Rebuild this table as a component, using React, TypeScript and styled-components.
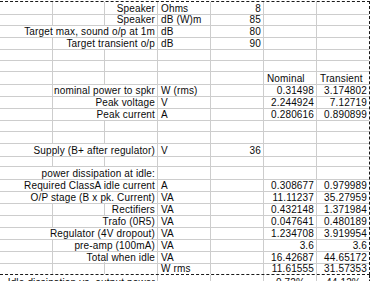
import React from "react";
import styled, { createGlobalStyle } from "styled-components";

const GlobalStyle = createGlobalStyle`
    html, body {
        margin: 0;
        padding: 0;
        background: #ffffff;
    }
    body {
        font-family: "Liberation Sans", Arial, sans-serif;
        overflow: hidden;
    }
`;

const GRID = "#cdcdcd";
const BREAK = "#1a1a1a";
const COLUMNS = "53px 52px 53px 53px 53px 53px 52px";

const Sheet = styled.div`
    padding-top: 1px;
    width: 373px;
    height: 281px;
    overflow: hidden;
`;

const Page = styled.div<{ $closed?: boolean }>`
    width: 369px;
    border-right: 1px dashed ${BREAK};
    border-top: ${(p) => (p.$closed ? `1px dashed ${BREAK}` : "none")};
    border-bottom: ${(p) => (p.$closed ? `1px dashed ${BREAK}` : "none")};

    & > div:last-child > div {
        border-bottom: ${(p) => (p.$closed ? "none" : `1px solid ${GRID}`)};
    }
`;

const Row = styled.div<{ $height: number; $drop?: number }>`
    display: grid;
    grid-template-columns: ${COLUMNS};
    height: ${(p) => p.$height}px;

    & > div {
        padding-top: ${(p) => 1 + (p.$drop ?? 0)}px;
    }

    & > div:last-child {
        border-right: none;
    }
`;

const Cell = styled.div<{ $align?: "left" | "right" | "center"; $span?: number }>`
    grid-column: span ${(p) => p.$span ?? 1};
    display: flex;
    align-items: center;
    justify-content: ${(p) =>
        p.$align === "right"
            ? "flex-end"
            : p.$align === "center"
            ? "center"
            : "flex-start"};
    padding: 1px 2px 0 3px;
    border-right: 1px solid ${GRID};
    border-bottom: 1px solid ${GRID};
    font-size: 10px;
    letter-spacing: 0.15px;
    color: #0a0a0a;
    white-space: nowrap;
    overflow: visible;
    min-width: 0;
`;

const Label = styled(Cell)`
    padding-left: 0;
    padding-right: 2px;
`;

type Line = {
    label?: string;
    span?: number;
    unit?: string;
    value?: string;
    f?: string;
    g?: string;
    head?: boolean;
    percent?: boolean;
};

const lines: Line[] = [
    { label: "Speaker", span: 1, unit: "Ohms", value: "8" },
    { label: "Speaker", span: 1, unit: "dB (W)m", value: "85" },
    { label: "Target max, sound o/p at 1m", span: 3, unit: "dB", value: "80" },
    { label: "Target transient o/p", span: 2, unit: "dB", value: "90" },
    {},
    {},
    { f: "Nominal", g: "Transient", head: true },
    { label: "nominal power to spkr", span: 2, unit: "W (rms)", f: "0.31498", g: "3.174802" },
    { label: "Peak voltage", span: 2, unit: "V", f: "2.244924", g: "7.12719" },
    { label: "Peak current", span: 2, unit: "A", f: "0.280616", g: "0.890899" },
    {},
    {},
    { label: "Supply (B+ after regulator)", span: 3, unit: "V", value: "36" },
    {},
    { label: "power dissipation at idle:", span: 3 },
    { label: "Required ClassA idle current", span: 3, unit: "A", f: "0.308677", g: "0.979989" },
    { label: "O/P stage (B x pk. Current)", span: 3, unit: "VA", f: "11.11237", g: "35.27959" },
    { label: "Rectifiers", span: 1, unit: "VA", f: "0.432148", g: "1.371984" },
    { label: "Trafo (0R5)", span: 2, unit: "VA", f: "0.047641", g: "0.480189" },
    { label: "Regulator (4V dropout)", span: 3, unit: "VA", f: "1.234708", g: "3.919954" },
    { label: "pre-amp (100mA)", span: 2, unit: "VA", f: "3.6", g: "3.6" },
    { label: "Total when idle", span: 2, unit: "VA", f: "16.42687", g: "44.65172" },
    { unit: "W rms", f: "11.61555", g: "31.57353" },
];

const overflowLine: Line = {
    label: "Idle dissipation vs. output power",
    span: 3,
    f: "0.72%",
    g: "44.12%",
    percent: true,
};

const SheetRow: React.FC<{ line: Line; height: number; drop?: number }> = ({
    line,
    height,
    drop,
}) => {
    const span = line.label ? line.span ?? 1 : 0;
    const blanks = Array.from({ length: 3 - span });
    const numberAlign = line.percent ? "center" : line.head ? "left" : "right";

    return (
        <Row $height={height} $drop={drop}>
            {blanks.map((_, i) => (
                <Cell key={i} />
            ))}
            {line.label && (
                <Label $span={span} $align="right">
                    {line.label}
                </Label>
            )}
            <Cell>{line.unit}</Cell>
            <Cell $align="right">{line.value}</Cell>
            <Cell $align={numberAlign}>{line.f}</Cell>
            <Cell $align={numberAlign}>{line.g}</Cell>
        </Row>
    );
};

const App: React.FC = (): JSX.Element => {
    return (
        <>
            <GlobalStyle />
            <Sheet>
                <Page $closed>
                    {lines.map((line, i) => (
                        <SheetRow key={i} line={line} height={i === 0 ? 11 : 11.88} />
                    ))}
                </Page>
                <Page>
                    <SheetRow line={overflowLine} height={12} drop={1} />
                </Page>
            </Sheet>
        </>
    );
};

export default App;
